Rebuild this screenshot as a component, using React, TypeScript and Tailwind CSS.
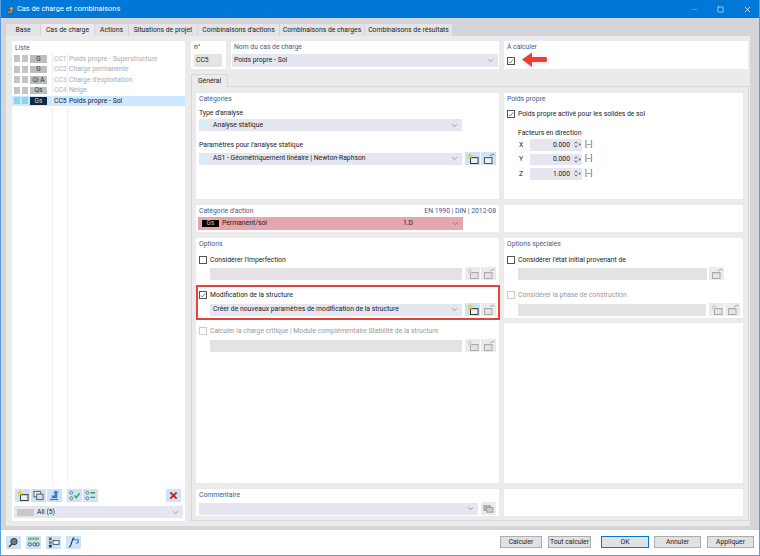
import React from 'react';
import { Minus, Square, X, ChevronDown } from 'lucide-react';

const Chevron = () => <ChevronDown className="w-[9px] h-[9px] text-[#666] shrink-0" strokeWidth={1.5} />;

// petits boutons d'icones
const NewIcon = ({ on = true }: { on?: boolean }) => (
  <svg viewBox="0 0 14 12" className="w-[14px] h-[12px]">
    <rect x="4.5" y="4.5" width="7.5" height="6" fill={on ? '#e8f1f8' : '#e4e4e4'} stroke={on ? '#3a3a3a' : '#aaa'} />
    <rect x="4.5" y="4" width="7.5" height="1.2" fill={on ? '#4d4d4d' : '#aaa'} />
    <path d="M4 0.5l.8 1.6 1.7.3-1.2 1.2.3 1.7-1.6-.8-1.6.8.3-1.7L1.5 2.4l1.7-.3z" fill={on ? '#f5dc2a' : '#ddd'} stroke={on ? '#c9a800' : '#aaa'} strokeWidth="0.3" />
  </svg>
);

const EditIcon = ({ on = true }: { on?: boolean }) => (
  <svg viewBox="0 0 14 12" className="w-[14px] h-[12px]">
    <rect x="2.5" y="4.5" width="7.5" height="6" fill={on ? '#f2efe6' : '#e4e4e4'} stroke={on ? '#555' : '#aaa'} />
    <rect x="2.5" y="4" width="7.5" height="1.2" fill={on ? '#666' : '#aaa'} />
    <path d="M8 3l3-2 1.5 1.5" fill="none" stroke={on ? '#777' : '#aaa'} />
  </svg>
);

const IconBtn = ({ on = true, children }: { on?: boolean; children: React.ReactNode }) => (
  <div className={`w-[15px] h-[13px] flex items-center justify-center shrink-0 ${on ? 'bg-[#cce4f7]' : 'bg-[#ebebeb]'}`}>{children}</div>
);

const Check = ({ checked = false, disabled = false }: { checked?: boolean; disabled?: boolean }) => (
  <div className={`w-[8px] h-[8px] border bg-white shrink-0 flex items-center justify-center ${disabled ? 'border-[#ccc]' : 'border-[#555]'}`}>
    {checked && (
      <svg viewBox="0 0 8 8" className="w-[7px] h-[7px]">
        <path d="M1 4l2 2 4-5" fill="none" stroke="#444" strokeWidth="0.9" />
      </svg>
    )}
  </div>
);

const Title = ({ children }: { children: React.ReactNode }) => (
  <div className="text-[#47568c] leading-[10px]">{children}</div>
);

const Panel = ({ className = '', children }: { className?: string; children?: React.ReactNode }) => (
  <div className={`bg-white shrink-0 ${className}`}>{children}</div>
);

const Select = ({ className = '', children }: { className?: string; children: React.ReactNode }) => (
  <div className={`h-[12px] bg-[#e6e6f0] flex items-center pl-[2px] pr-[3px] text-[#222] ${className}`}>
    <div className="flex-1 flex items-center min-w-0 whitespace-nowrap">{children}</div>
    <Chevron />
  </div>
);

const LIST = [
  { badge: 'G', code: 'CC1', name: 'Poids propre - Superstructure' },
  { badge: 'G', code: 'CC2', name: 'Charge permanente' },
  { badge: 'Qi A', code: 'CC3', name: "Charge d'exploitation" },
  { badge: 'Qs', code: 'CC4', name: 'Neige' },
  { badge: 'Gs', code: 'CC5', name: 'Poids propre - Sol', selected: true },
];

const TABS = [
  { label: 'Base', w: 'w-[34px]' },
  { label: 'Cas de charge', w: 'w-[53px]' },
  { label: 'Actions', w: 'w-[33px]' },
  { label: 'Situations de projet', w: 'w-[68px]' },
  { label: "Combinaisons d'actions", w: 'w-[81px]' },
  { label: 'Combinaisons de charges', w: 'w-[84px]' },
  { label: 'Combinaisons de résultats', w: 'w-[87px]' },
];

const FACTORS = [['X', '0.000'], ['Y', '0.000'], ['Z', '1.000']];

const FootBtn = ({ label, primary = false, className = '' }: { label: string; primary?: boolean; className?: string }) => (
  <div className={`h-[12px] flex items-center justify-center bg-[#e1e1e1] whitespace-nowrap text-[#222] shrink-0 border ${primary ? 'border-[#0078d7]' : 'border-[#adadad]'} ${className}`}>{label}</div>
);

export default function App() {
  return (
    <div className="w-[760px] h-[556px] flex flex-col bg-white border-x border-b border-[#5a9fdc] text-[6.8px] overflow-hidden relative" style={{ fontFamily: 'Roboto, "Noto Sans", sans-serif' }}>
      {/* Barre de titre */}
      <div className="h-[18px] -mx-px bg-[#0078d7] flex items-center pl-[6px] text-white shrink-0">
        <svg viewBox="0 0 10 10" className="w-[9px] h-[9px] mr-[2px]">
          <path d="M2 9l1-5 4-3 1 3-2 5z" fill="#c9b26a" stroke="#444" strokeWidth="0.6" />
          <circle cx="4" cy="6" r="1.5" fill="#3d5a80" />
        </svg>
        <span className="text-[7.4px]">Cas de charge et combinaisons</span>
        <div className="ml-auto flex items-center">
          <div className="w-[26px] flex justify-center"><Minus className="w-[9px] h-[9px] text-[#4fa3e6]" /></div>
          <div className="w-[27px] flex justify-center"><Square className="w-[7px] h-[7px]" strokeWidth={2} /></div>
          <div className="w-[26px] flex justify-center"><X className="w-[9px] h-[9px]" /></div>
        </div>
      </div>

      {/* Zone principale */}
      <div className="h-[512px] bg-[#d5d5d9] pl-[5px] pr-[9px] pt-[6px] shrink-0">
        <div className="flex h-[12px]">
          {TABS.map((t) => (
            <div key={t.label} className={`h-[12px] mr-px flex items-center justify-center whitespace-nowrap text-[#222] ${t.w} ${t.label === 'Cas de charge' ? 'bg-[#ebebeb]' : 'bg-[#e4e4e6]'}`}>{t.label}</div>
          ))}
        </div>
        <div className="h-[490px] bg-[#ebebeb] pl-[6px] pt-[5px] flex gap-[6px]">
          {/* Liste */}
          <Panel className="w-[173px] h-[480px] flex flex-col relative">
            <div className="px-[3px] pt-[2px] text-[#47568c] h-[12.5px] leading-[10px]">Liste</div>
            <div className="flex-1 flex flex-col">
              {LIST.map((r) => (
                <div key={r.code} className={`h-[10.5px] flex items-center pl-[2px] ${r.selected ? 'bg-[#cce8ff]' : ''}`}>
                  <div className={`w-[6px] h-[7px] mr-[2px] ${r.selected ? 'bg-[#8dd6f0]' : 'bg-[#c4c4c4]'}`} />
                  <div className={`w-[6px] h-[7px] mr-[2px] ${r.selected ? 'bg-[#8dd6f0]' : 'bg-[#c4c4c4]'}`} />
                  <div className={`w-[17px] h-[7.5px] flex items-center justify-center text-[6.5px] leading-none ${r.selected ? 'bg-[#0e2a45] text-[#ddd]' : 'bg-[#bdbdbd] text-[#333]'}`}>{r.badge}</div>
                  <div className={`w-[15px] ml-[7px] whitespace-nowrap ${r.selected ? 'text-[#222]' : 'text-[#b5b5b5]'}`}>{r.code}</div>
                  <div className={`whitespace-nowrap ${r.selected ? 'text-[#222]' : 'text-[#aaa]'}`}>{r.name}</div>
                </div>
              ))}
            </div>
            <div className="flex items-center px-[3px] h-[13px]">
              <IconBtn><NewIcon /></IconBtn>
              <div className="w-px" />
              <IconBtn>
                <svg viewBox="0 0 14 12" className="w-[13px] h-[11px]"><rect x="2" y="1.5" width="7" height="6" fill="#e8f1f8" stroke="#555" /><rect x="5" y="4.5" width="7" height="6" fill="#cfe0ee" stroke="#555" /></svg>
              </IconBtn>
              <div className="w-px" />
              <IconBtn>
                <svg viewBox="0 0 14 12" className="w-[13px] h-[11px]"><path d="M2 10.5h9" stroke="#555" /><path d="M4 9V6h3V3H5l3.5-2.5L12 3h-2v6z" fill="#3f78c8" /></svg>
              </IconBtn>
              <div className="w-[5px]" />
              <IconBtn>
                <svg viewBox="0 0 14 12" className="w-[13px] h-[11px]"><circle cx="3.5" cy="3" r="1.6" fill="none" stroke="#777" /><circle cx="3.5" cy="9" r="1.6" fill="none" stroke="#777" /><path d="M7 6l2 2.5 3.5-5" fill="none" stroke="#2e9e3a" strokeWidth="1.4" /></svg>
              </IconBtn>
              <div className="w-px" />
              <IconBtn>
                <svg viewBox="0 0 14 12" className="w-[13px] h-[11px]"><circle cx="3.5" cy="3" r="1.6" fill="none" stroke="#777" /><circle cx="3.5" cy="9" r="1.6" fill="none" stroke="#777" /><path d="M7 3h5M7 8h5" stroke="#2e9e3a" strokeWidth="1.4" /></svg>
              </IconBtn>
              <div className="ml-auto mr-[1px]">
                <IconBtn>
                  <svg viewBox="0 0 10 10" className="w-[9px] h-[9px]"><path d="M1.5 1.5l7 7M8.5 1.5l-7 7" stroke="#e01a1a" strokeWidth="2.2" /></svg>
                </IconBtn>
              </div>
            </div>
            <Select className="mx-[2px] mt-[4px] mb-[3px]">
              <div className="w-[17px] h-[7px] bg-[#c8c8c8] ml-[1px] mr-[3px]" />
              <span>All (5)</span>
            </Select>
            {/* separateurs de colonnes */}
            <div className="absolute left-[40px] top-[12px] bottom-[35px] w-px bg-[#f0f0f0]" />
            <div className="absolute left-[55px] top-[12px] bottom-[35px] w-px bg-[#f0f0f0]" />
          </Panel>

          {/* Droite */}
          <div className="w-[558px] shrink-0 flex flex-col">
            <div className="flex gap-[5px] h-[28px]">
              <Panel className="w-[35px] px-[3px] pt-[1px]">
                <div className="text-[#222] leading-[10px]">n°</div>
                <div className="h-[13px] mt-[2px] mr-[1px] bg-[#e4e4e4] flex items-center pl-[2px] text-[#222]">CC5</div>
              </Panel>
              <Panel className="w-[268px] px-[1px] pt-[1px]">
                <div className="pl-[2px] text-[#47568c] leading-[10px]">Nom du cas de charge</div>
                <Select className="mt-[2px] !h-[13px]">Poids propre - Sol</Select>
              </Panel>
              <Panel className="w-[244px] px-[3px] pt-[1px]">
                <Title>À calculer</Title>
                <div className="mt-[5px]"><Check checked /></div>
              </Panel>
            </div>

            <div className="mt-[5px] w-[37px] h-[13px] bg-[#ebebeb] border border-b-0 border-[#d8d8d8] flex items-center justify-center text-[#222] relative z-10">Général</div>
            <div className="w-[558px] h-[435px] -mt-px border border-[#d8d8d8] px-[4px] pt-[6px] flex flex-col gap-[6px]">
              {/* Categories + poids propre */}
              <div className="flex gap-[5px] h-[106px]">
                <Panel className="w-[303px] px-[3px] pt-[1px]">
                  <Title>Catégories</Title>
                  <div className="mt-[4px] leading-[10px] text-[#222]">Type d'analyse</div>
                  <Select className="w-[263px] mt-[1px]">
                    <div className="w-[6px] h-[6px] bg-[#cff3fa] ml-[1px] mr-[5px]" />
                    Analyse statique
                  </Select>
                  <div className="mt-[9px] leading-[10px] text-[#222]">Paramètres pour l'analyse statique</div>
                  <div className="flex items-center mt-[2px]">
                    <Select className="w-[263px]">
                      <div className="w-[6px] h-[6px] bg-[#cff3fa] ml-[1px] mr-[5px]" />
                      AS1 - Géométriquement linéaire | Newton-Raphson
                    </Select>
                    <div className="w-[3px]" />
                    <IconBtn><NewIcon /></IconBtn>
                    <div className="w-px" />
                    <IconBtn><EditIcon /></IconBtn>
                  </div>
                </Panel>
                <Panel className="w-[239px] px-[3px] pt-[1px]">
                  <Title>Poids propre</Title>
                  <div className="flex items-center gap-[3px] mt-[5px] h-[10px] text-[#222]"><Check checked />Poids propre activé pour les solides de sol</div>
                  <div className="ml-[11px] mt-[9px] leading-[10px] text-[#222]">Facteurs en direction</div>
                  <div className="mt-[1px] flex flex-col gap-[3px]">
                    {FACTORS.map(([axis, val]) => (
                      <div key={axis} className="flex items-center h-[11.5px] text-[#222]">
                        <div className="w-[23px] pl-[12px]">{axis}</div>
                        <div className="w-[52px] h-[11.5px] bg-[#e6e6f0] flex items-center justify-end pr-[1px]">
                          <span>{val}</span>
                          <svg viewBox="0 0 10 10" className="w-[9px] h-[9px] ml-[2px]"><path d="M3 4l1.5-2L6 4M3 6l1.5 2L6 6" fill="none" stroke="#444" strokeWidth="0.8" /><path d="M8 3.5L10 5 8 6.5z" fill="#444" /></svg>
                        </div>
                        <div className="ml-[3px] text-[#444]">[--]</div>
                      </div>
                    ))}
                  </div>
                </Panel>
              </div>

              {/* Categorie d'action */}
              <div className="flex gap-[5px] h-[27px]">
                <Panel className="w-[303px] px-[2px] pt-[1px]">
                  <div className="flex justify-between px-[1px] leading-[10px]">
                    <span className="text-[#47568c]">Catégorie d'action</span>
                    <span className="text-[#47568c]">EN 1990 | DIN | 2012-08</span>
                  </div>
                  <div className="w-[265px] h-[13px] bg-[#e5a6ae] flex items-center pl-[4px] pr-[3px] mt-[1px] text-[#222]">
                    <div className="w-[17px] h-[7px] bg-black text-[#ccc] text-[6.5px] flex items-center justify-center mr-[3px]">Gs</div>
                    <div className="w-[181px]">Permanent/sol</div>
                    <div className="flex-1">1.D</div>
                    <Chevron />
                  </div>
                </Panel>
                <Panel className="w-[239px]" />
              </div>

              {/* Options */}
              <div className="flex gap-[5px] h-[245px]">
                <Panel className="w-[303px] px-[3px] pt-[1px]">
                  <Title>Options</Title>
                  <div className="flex items-center gap-[3px] mt-[6px] h-[10px] text-[#222]"><Check />Considérer l'imperfection</div>
                  <div className="flex items-center mt-[2px] ml-[11px]">
                    <div className="w-[252px] h-[12px] bg-[#e3e3e3]" />
                    <div className="w-[3px]" />
                    <IconBtn on={false}><NewIcon on={false} /></IconBtn>
                    <div className="w-px" />
                    <IconBtn on={false}><EditIcon on={false} /></IconBtn>
                  </div>
                  <div className="flex items-center gap-[3px] mt-[10px] h-[10px] text-[#222]"><Check checked />Modification de la structure</div>
                  <div className="flex items-center mt-[3px] ml-[11px]">
                    <Select className="w-[252px]"><span className="pl-[1px]">Créer de nouveaux paramètres de modification de la structure</span></Select>
                    <div className="w-[3px]" />
                    <IconBtn><NewIcon /></IconBtn>
                    <div className="w-px" />
                    <IconBtn on={false}><EditIcon on={false} /></IconBtn>
                  </div>
                  <div className="flex items-center gap-[3px] mt-[10px] h-[10px] text-[#999]"><Check disabled />Calculer la charge critique | Module complémentaire Stabilité de la structure</div>
                  <div className="flex items-center mt-[3px] ml-[11px]">
                    <div className="w-[252px] h-[12px] bg-[#e3e3e3]" />
                    <div className="w-[3px]" />
                    <IconBtn on={false}><NewIcon on={false} /></IconBtn>
                    <div className="w-px" />
                    <IconBtn on={false}><EditIcon on={false} /></IconBtn>
                  </div>
                </Panel>
                <div className="w-[239px] shrink-0 flex flex-col gap-[5px]">
                  <Panel className="h-[80px] px-[3px] pt-[1px]">
                    <Title>Options spéciales</Title>
                    <div className="flex items-center gap-[3px] mt-[6px] h-[10px] text-[#222]"><Check />Considérer l'état initial provenant de</div>
                    <div className="flex items-center mt-[2px] ml-[11px]">
                      <div className="w-[189px] h-[12px] bg-[#e3e3e3]" />
                      <div className="w-[2px]" />
                      <IconBtn on={false}><EditIcon on={false} /></IconBtn>
                    </div>
                    <div className="flex items-center gap-[3px] mt-[10px] h-[10px] text-[#999]"><Check disabled />Considérer la phase de construction</div>
                    <div className="flex items-center mt-[3px] ml-[11px]">
                      <div className="w-[189px] h-[12px] bg-[#e3e3e3]" />
                      <div className="w-[3px]" />
                      <IconBtn on={false}><NewIcon on={false} /></IconBtn>
                      <div className="w-px" />
                      <IconBtn on={false}><EditIcon on={false} /></IconBtn>
                    </div>
                  </Panel>
                  <Panel className="flex-1" />
                </div>
              </div>

              {/* Commentaire */}
              <div className="flex gap-[5px] h-[27px]">
                <Panel className="w-[303px] px-[3px] pt-[1px]">
                  <Title>Commentaire</Title>
                  <div className="flex items-center mt-[2px]">
                    <Select className="w-[280px]"><span /></Select>
                    <div className="w-[3px]" />
                    <IconBtn on={false}>
                      <svg viewBox="0 0 14 12" className="w-[13px] h-[11px]"><rect x="2" y="3" width="7" height="5" fill="#bbb" stroke="#999" /><rect x="5" y="5" width="7" height="5" fill="#ccc" stroke="#999" /></svg>
                    </IconBtn>
                  </div>
                </Panel>
                <Panel className="w-[239px]" />
              </div>
            </div>
          </div>
        </div>
      </div>

      {/* Barre du bas */}
      <div className="flex-1 flex items-center pl-[5px] pr-[5px] pb-[1px]">
        <IconBtn>
          <svg viewBox="0 0 14 12" className="w-[13px] h-[11px]"><circle cx="7.5" cy="5" r="3.5" fill="#777" stroke="#333" /><path d="M5 8l-3 3" stroke="#333" strokeWidth="1.5" /></svg>
        </IconBtn>
        <div className="w-[5px]" />
        <IconBtn>
          <svg viewBox="0 0 14 12" className="w-[13px] h-[11px]"><rect x="1" y="0.5" width="12" height="3" fill="#7fbf7f" /><circle cx="3" cy="8" r="1.8" fill="none" stroke="#456" /><circle cx="8" cy="8" r="1.8" fill="none" stroke="#456" /><circle cx="11.5" cy="8" r="1.8" fill="none" stroke="#456" /></svg>
        </IconBtn>
        <div className="w-[5px]" />
        <IconBtn>
          <svg viewBox="0 0 14 12" className="w-[13px] h-[11px]"><rect x="2" y="0.5" width="3" height="3" fill="#d33" /><rect x="2" y="4.5" width="3" height="3" fill="#3a3" /><rect x="2" y="8.5" width="3" height="3" fill="#333" /><rect x="6.5" y="4" width="6.5" height="4" fill="#fff" stroke="#446" /></svg>
        </IconBtn>
        <div className="w-[5px]" />
        <IconBtn>
          <svg viewBox="0 0 14 12" className="w-[13px] h-[11px]"><path d="M2 11c2 0 2-2 3-5s1-5 3-5" fill="none" stroke="#334" strokeWidth="1.2" /><path d="M7 3h5v3l-2 1" fill="none" stroke="#3f78c8" strokeWidth="1.3" /></svg>
        </IconBtn>
        <div className="ml-auto flex items-center">
          <FootBtn label="Calculer" className="w-[42px]" />
          <FootBtn label="Tout calculer" className="w-[43px] ml-[6px]" />
          <FootBtn label="OK" primary className="w-[48px] ml-[10px]" />
          <FootBtn label="Annuler" className="w-[47px] ml-[5px]" />
          <FootBtn label="Appliquer" className="w-[47px] ml-[6px]" />
        </div>
      </div>

      {/* Annotations rouges par dessus la capture */}
      <div className="absolute left-[195px] top-[285px] w-[304px] h-[35px] border-2 border-[#e8413c] pointer-events-none" />
      <svg viewBox="0 0 28 18" className="absolute left-[520px] top-[51px] w-[28px] h-[18px] pointer-events-none drop-shadow-sm">
        <path d="M1 8.5L11 1.5v4.5h14c1.5 0 1.5 5 0 5H11v5z" fill="#e8413c" />
      </svg>
    </div>
  );
}
